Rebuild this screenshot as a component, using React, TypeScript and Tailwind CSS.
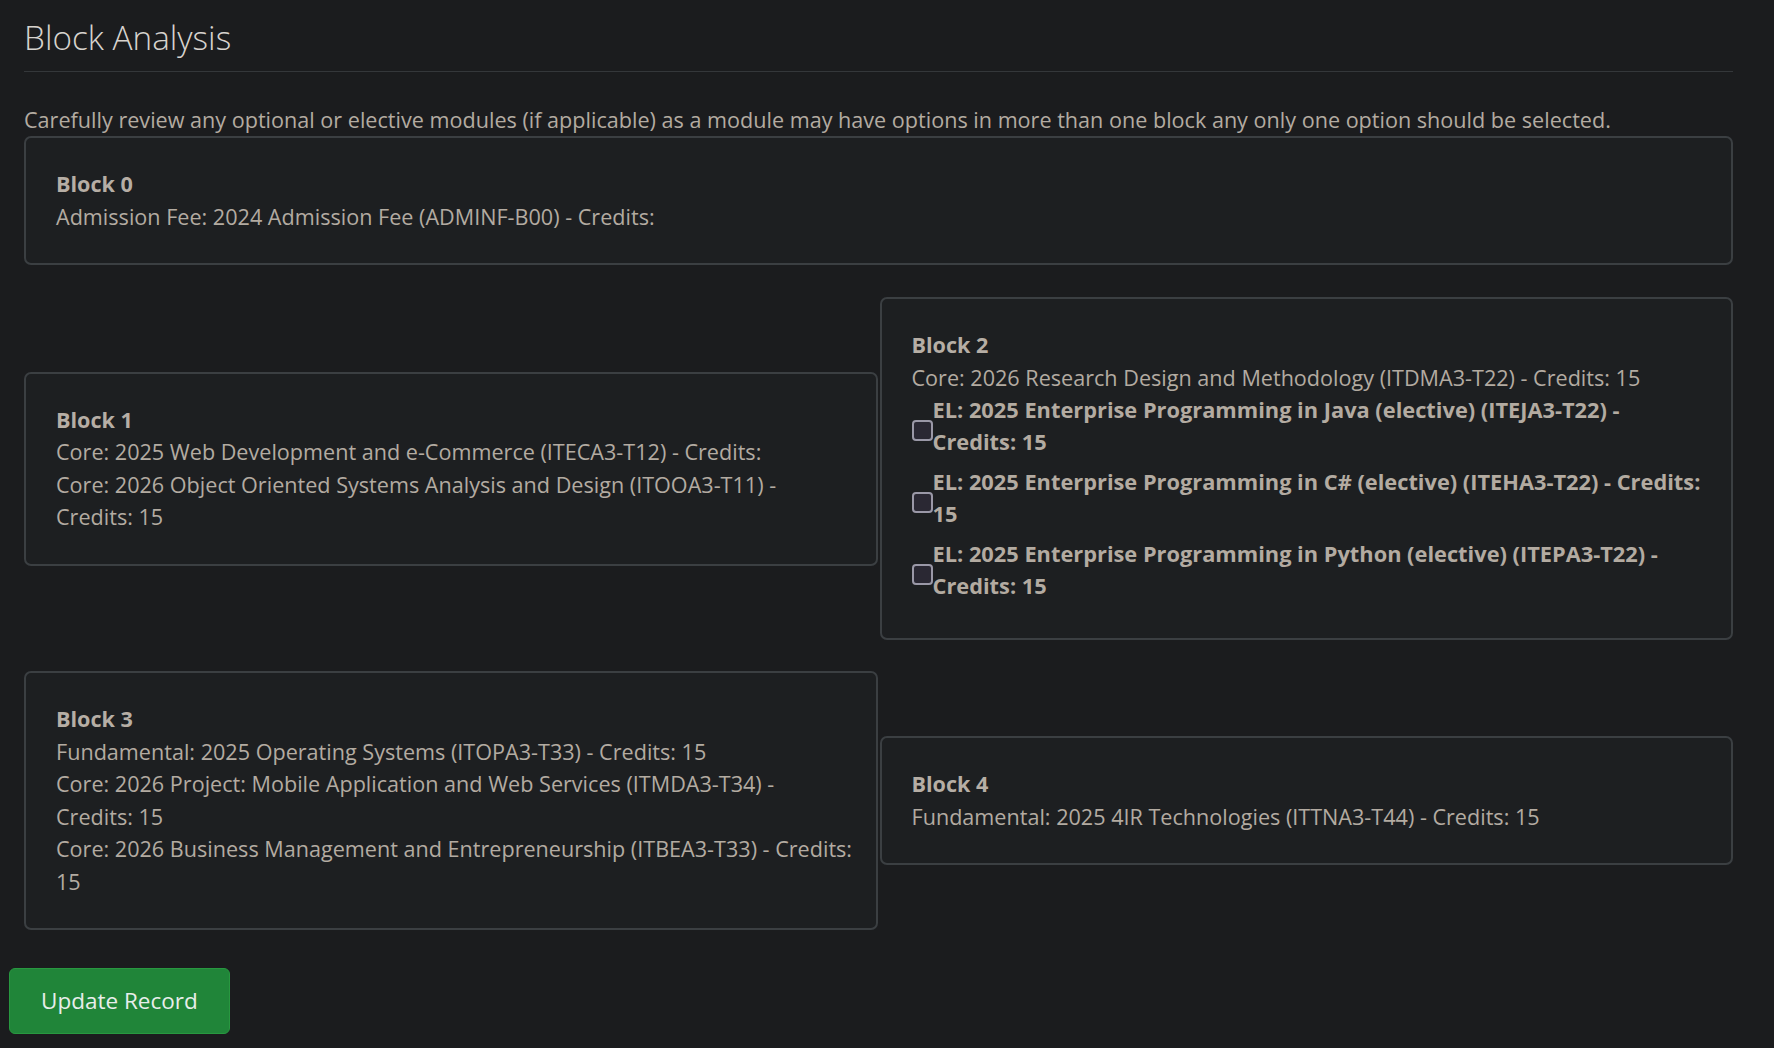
const font = { fontFamily: '"Open Sans", "Noto Sans", sans-serif' };

type Elective = { lines: string[] };

const Card = ({ title, children }: { title: string; children: React.ReactNode }) => (
  <div className="rounded-[7px] border-2 border-[#3b3f42] bg-[#1d1f21] p-[30px]">
    <div className="font-bold text-[#b6aea5]">{title}</div>
    {children}
  </div>
);

const Line = ({ lines }: { lines: string[] }) => (
  <div>
    {lines.map((l) => (
      <div key={l} className="whitespace-nowrap">
        {l}
      </div>
    ))}
  </div>
);

const ElectiveRow = ({ lines }: Elective) => (
  <label className="mb-[7px] flex items-center last:mb-0">
    <span className="mt-[8px] h-[21px] w-[21px] shrink-0 rounded-[4px] border-[2.5px] border-[#9a98a7] bg-[#2a2833]" />
    <span className="text-[21.8px] font-bold">
      {lines.map((l) => (
        <span key={l} className="block whitespace-nowrap">
          {l}
        </span>
      ))}
    </span>
  </label>
);

export default function App() {
  return (
    <div
      style={font}
      className="min-h-screen bg-[#1b1c1e] pl-[9px] pr-[26px] text-[21.6px] leading-[32.4px] text-[#b3aba1]"
    >
      <div className="px-[15px] pt-[17px]">
        <h1 className="text-[33.3px] font-light leading-[40px] text-[#d7d3ce]">Block Analysis</h1>
        <hr className="mt-[14px] border-t border-[#34373a]" />
        <p className="mt-[32px]">
          Carefully review any optional or elective modules (if applicable) as a module may have options in more than one block any only one option should be selected.
        </p>

        <Card title="Block 0">
          <Line lines={["Admission Fee: 2024 Admission Fee (ADMINF-B00) - Credits:"]} />
        </Card>

        <div className="mt-[32px] grid grid-cols-2 items-center gap-[2px]">
          <Card title="Block 1">
            <Line lines={["Core: 2025 Web Development and e-Commerce (ITECA3-T12) - Credits:"]} />
            <Line lines={["Core: 2026 Object Oriented Systems Analysis and Design (ITOOA3-T11) -", "Credits: 15"]} />
          </Card>
          <div className="rounded-[7px] border-2 border-[#3b3f42] bg-[#1d1f21] px-[30px] pt-[30px] pb-[36px]">
            <div className="font-bold text-[#b6aea5]">Block 2</div>
            <Line lines={["Core: 2026 Research Design and Methodology (ITDMA3-T22) - Credits: 15"]} />
            <ElectiveRow lines={["EL: 2025 Enterprise Programming in Java (elective) (ITEJA3-T22) -", "Credits: 15"]} />
            <ElectiveRow lines={["EL: 2025 Enterprise Programming in C# (elective) (ITEHA3-T22) - Credits:", "15"]} />
            <ElectiveRow lines={["EL: 2025 Enterprise Programming in Python (elective) (ITEPA3-T22) -", "Credits: 15"]} />
          </div>
        </div>

        <div className="mt-[31px] grid grid-cols-2 items-center gap-[2px]">
          <Card title="Block 3">
            <Line lines={["Fundamental: 2025 Operating Systems (ITOPA3-T33) - Credits: 15"]} />
            <Line lines={["Core: 2026 Project: Mobile Application and Web Services (ITMDA3-T34) -", "Credits: 15"]} />
            <Line lines={["Core: 2026 Business Management and Entrepreneurship (ITBEA3-T33) - Credits:", "15"]} />
          </Card>
          <Card title="Block 4">
            <Line lines={["Fundamental: 2025 4IR Technologies (ITTNA3-T44) - Credits: 15"]} />
          </Card>
        </div>
      </div>

      <button className="mt-[38px] block rounded-[6px] border border-[#289840] bg-[#208539] px-[31px] py-[13px] text-[22.5px] leading-[38px] text-[#e8eeeb]">
        Update Record
      </button>
    </div>
  );
}
